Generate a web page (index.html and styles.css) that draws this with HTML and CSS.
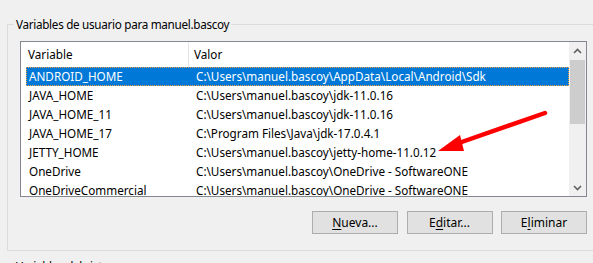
FILE: index.html
```html
<!DOCTYPE html>
<html lang="es">
<head>
    <meta charset="UTF-8">
    <meta name="viewport" content="width=device-width, initial-scale=1.0">
    <title>Variables de entorno</title>
    <link rel="stylesheet" href="styles.css">
</head>
<body>
    <div class="dialog">
        <fieldset class="group">
            <legend>Variables de usuario para manuel.bascoy</legend>
            <div class="listbox">
                <div class="list">
                    <div class="list-head">
                        <span class="head-name">Variable</span>
                        <span class="head-value">Valor</span>
                    </div>
                    <div class="row selected">
                        <span class="cell-name">ANDROID_HOME</span>
                        <span class="cell-value">C:\Users\manuel.bascoy\AppData\Local\Android\Sdk</span>
                    </div>
                    <div class="row">
                        <span class="cell-name">JAVA_HOME</span>
                        <span class="cell-value">C:\Users\manuel.bascoy\jdk-11.0.16</span>
                    </div>
                    <div class="row">
                        <span class="cell-name">JAVA_HOME_11</span>
                        <span class="cell-value">C:\Users\manuel.bascoy\jdk-11.0.16</span>
                    </div>
                    <div class="row">
                        <span class="cell-name">JAVA_HOME_17</span>
                        <span class="cell-value">C:\Program Files\Java\jdk-17.0.4.1</span>
                    </div>
                    <div class="row">
                        <span class="cell-name">JETTY_HOME</span>
                        <span class="cell-value">C:\Users\manuel.bascoy\jetty-home-11.0.12</span>
                    </div>
                    <div class="row">
                        <span class="cell-name">OneDrive</span>
                        <span class="cell-value">C:\Users\manuel.bascoy\OneDrive - SoftwareONE</span>
                    </div>
                    <div class="row">
                        <span class="cell-name">OneDriveCommercial</span>
                        <span class="cell-value">C:\Users\manuel.bascoy\OneDrive - SoftwareONE</span>
                    </div>
                </div>
                <div class="scrollbar">
                    <div class="sb-btn">
                        <svg width="9" height="6" viewBox="0 0 9 6"><path d="M1 5 L4.5 1.5 L8 5" fill="none" stroke="#606060" stroke-width="1.6"/></svg>
                    </div>
                    <div class="sb-track"><div class="sb-thumb"></div></div>
                    <div class="sb-btn">
                        <svg width="9" height="6" viewBox="0 0 9 6"><path d="M1 1 L4.5 4.5 L8 1" fill="none" stroke="#606060" stroke-width="1.6"/></svg>
                    </div>
                </div>
            </div>
            <div class="buttons">
                <button class="btn"><u>N</u>ueva...</button>
                <button class="btn">E<u>d</u>itar...</button>
                <button class="btn">E<u>l</u>iminar</button>
            </div>
        </fieldset>
        <fieldset class="group system">
            <legend>Variables del sistema</legend>
        </fieldset>

        <!-- red annotation arrow drawn over the list -->
        <svg class="arrow" width="593" height="263" viewBox="0 0 593 263">
            <line x1="545" y1="113" x2="456" y2="144" stroke="#ff0000" stroke-width="4.5" stroke-linecap="round"/>
            <polygon points="438,151 460,135 464,151" fill="#ff0000"/>
        </svg>
    </div>
</body>
</html>
```

FILE: styles.css
```css
body {
    margin: 0;
    padding: 0;
    background-color: #f0f0f0;
    font-family: "Noto Sans", "Open Sans", sans-serif;
    font-size: 11.7px;
    color: #000;
    overflow: hidden;
}

.dialog {
    position: relative;
    width: 593px;
    height: 263px;
    overflow: hidden;
}

.group {
    margin: 16px 0 0 7px;
    padding: 9px 0 16px 12px;
    width: 600px;
    border: 1px solid #dcdcdc;
    box-sizing: border-box;
}

.group legend {
    margin-left: -6px;
    padding: 0 2px;
    line-height: 16px;
    letter-spacing: -0.3px;
}

.group.system {
    margin-top: 7px;
    height: 40px;
}

.listbox {
    display: flex;
    width: 567px;
    height: 156px;
    border: 1px solid #828790;
    background-color: #fff;
    box-sizing: border-box;
    overflow: hidden;
}

.list {
    width: 548px;
}

.list-head {
    display: flex;
    height: 25px;
    line-height: 25px;
}

.head-name {
    width: 160px;
    padding-left: 7px;
    border-right: 1px solid #e5e5e5;
}

.head-value {
    padding-left: 5px;
}

.row {
    display: flex;
    margin-left: 5px;
    height: 19px;
    line-height: 19px;
    white-space: nowrap;
}

.row.selected {
    background-color: #0078d7;
    color: #fff;
    outline: 1px dotted #f5a040;
    outline-offset: -1px;
}

.cell-name {
    width: 161px;
    padding-left: 3px;
}

.cell-value {
    padding-left: 6px;
}

.scrollbar {
    display: flex;
    flex-direction: column;
    width: 17px;
    background-color: #f0f0f0;
}

.sb-btn {
    height: 17px;
    display: flex;
    align-items: center;
    justify-content: center;
}

.sb-track {
    flex: 1;
    padding: 1px 1px 0 1px;
}

.sb-thumb {
    height: 64px;
    background-color: #cdcdcd;
}

.buttons {
    display: flex;
    justify-content: flex-end;
    gap: 8.5px;
    width: 567px;
    margin-top: 14px;
}

.btn {
    width: 86px;
    height: 23px;
    padding: 0;
    font-family: inherit;
    font-size: 12px;
    color: #000;
    background-color: #e1e1e1;
    border: 1px solid #adadad;
}

.btn u {
    text-decoration-thickness: 1px;
    text-underline-offset: 2px;
}

.arrow {
    position: absolute;
    left: 0;
    top: 0;
    pointer-events: none;
}
```
